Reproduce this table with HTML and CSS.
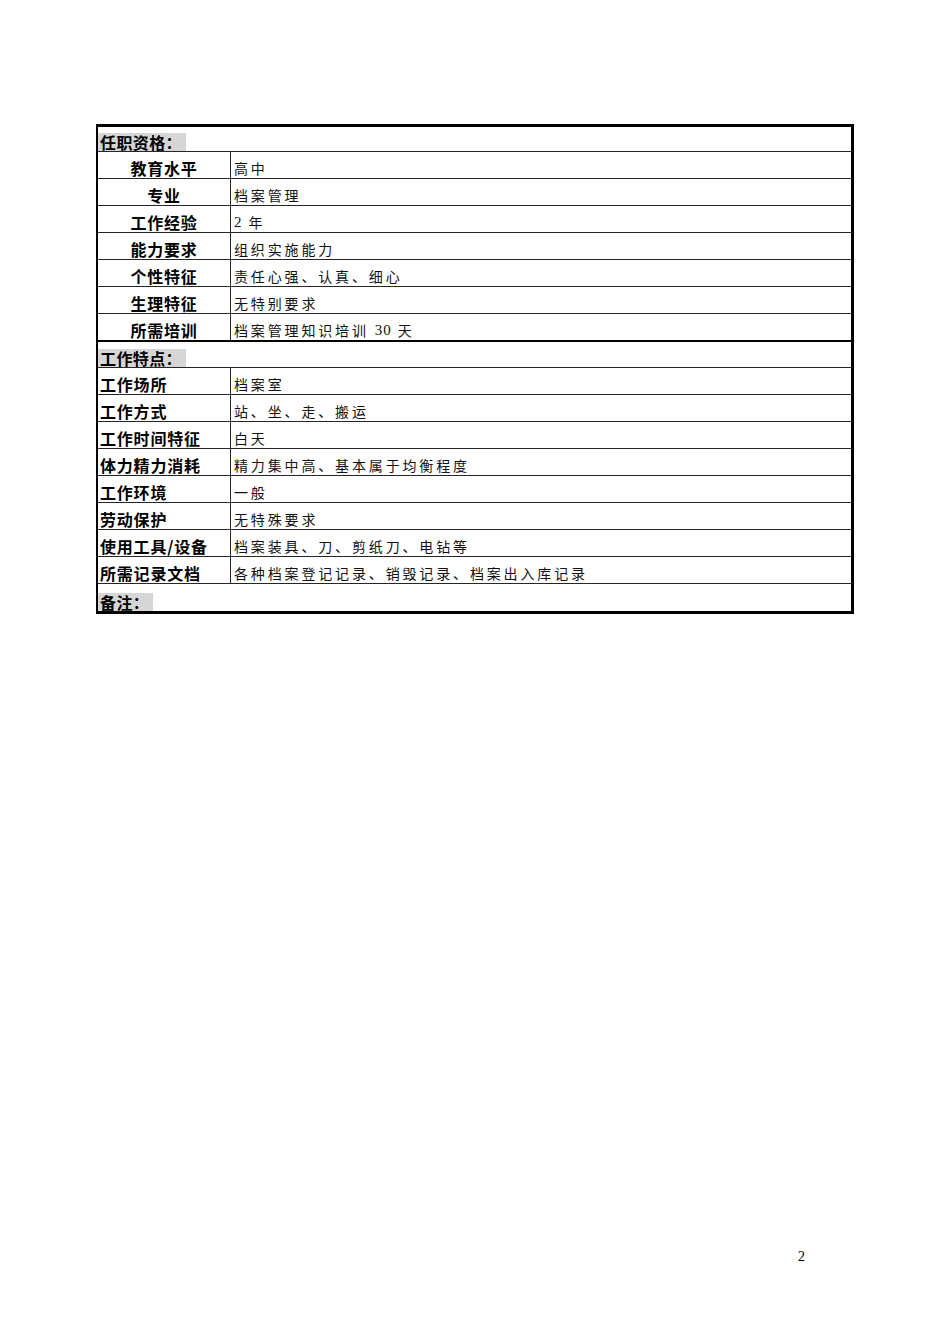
FILE: index.html
```html
<!DOCTYPE html>
<html lang="zh">
<head>
<meta charset="utf-8">
<title>任职资格</title>
<link rel="stylesheet" href="styles.css">
</head>
<body>
<div class="page">
  <div class="sheet">
    <div class="row section"><span class="tag">任职资格：</span></div>
    <div class="row"><div class="label center">教育水平</div><div class="value">高中</div></div>
    <div class="row"><div class="label center">专业</div><div class="value">档案管理</div></div>
    <div class="row"><div class="label center">工作经验</div><div class="value"><span class="num">2</span>&nbsp;年</div></div>
    <div class="row"><div class="label center">能力要求</div><div class="value">组织实施能力</div></div>
    <div class="row"><div class="label center">个性特征</div><div class="value">责任心强、认真、细心</div></div>
    <div class="row"><div class="label center">生理特征</div><div class="value">无特别要求</div></div>
    <div class="row last"><div class="label center">所需培训</div><div class="value">档案管理知识培训&nbsp;<span class="num">30</span>&nbsp;天</div></div>
    <div class="row section"><span class="tag">工作特点：</span></div>
    <div class="row"><div class="label">工作场所</div><div class="value">档案室</div></div>
    <div class="row"><div class="label">工作方式</div><div class="value">站、坐、走、搬运</div></div>
    <div class="row"><div class="label">工作时间特征</div><div class="value">白天</div></div>
    <div class="row"><div class="label">体力精力消耗</div><div class="value">精力集中高、基本属于均衡程度</div></div>
    <div class="row"><div class="label">工作环境</div><div class="value">一般</div></div>
    <div class="row"><div class="label">劳动保护</div><div class="value">无特殊要求</div></div>
    <div class="row"><div class="label">使用工具/设备</div><div class="value">档案装具、刀、剪纸刀、电钻等</div></div>
    <div class="row"><div class="label">所需记录文档</div><div class="value">各种档案登记记录、销毁记录、档案出入库记录</div></div>
    <div class="row section end"><span class="tag">备注：</span></div>
  </div>
  <div class="pagenum">2</div>
</div>
</body>
</html>
```

FILE: styles.css
```css
html, body {
  margin: 0;
  padding: 0;
  background: #fff;
}
.page {
  width: 950px;
  height: 1344px;
  padding-top: 124px;
  box-sizing: border-box;
}
.sheet {
  margin-left: 96px;
  width: 758px;
  box-sizing: border-box;
  border-top: 3px solid #000;
  border-left: 2px solid #000;
  border-right: 3px solid #000;
  border-bottom: 3px solid #000;
  font-family: "Noto Sans CJK SC", sans-serif;
  color: #000;
}
.row {
  display: grid;
  grid-template-columns: 133px 1fr;
  height: 26px;
  border-bottom: 1px solid #262626;
}
.row.last {
  border-bottom: 2px solid #000;
  height: 26px;
}
.row.section {
  display: flex;
  align-items: flex-end;
  height: 25px;
}
.row.section:first-child {
  height: 24px;
}
.row.section.end {
  border-bottom: none;
  height: 27px;
}
.tag {
  font-weight: 700;
  font-size: 16px;
  line-height: 18px;
  background: #d6d6d6;
  padding: 0 4px 0 2px;
  letter-spacing: 0.4px;
}
.label {
  display: flex;
  align-items: flex-end;
  border-right: 1px solid #262626;
  font-weight: 700;
  font-size: 16px;
  line-height: 18px;
  padding: 0 0 1px 2px;
  letter-spacing: 0.8px;
  white-space: nowrap;
}
.label.center {
  justify-content: center;
  padding-left: 0;
}
.value {
  display: flex;
  align-items: flex-end;
  font-size: 14px;
  line-height: 16px;
  padding: 0 0 2px 3px;
  letter-spacing: 2.85px;
  font-weight: 400;
  color: #111;
  white-space: nowrap;
}
.num {
  font-family: "Liberation Serif", serif;
  font-size: 15px;
  letter-spacing: 1px;
}
.pagenum {
  margin-top: calc(1249px - 124px - 490px);
  padding-left: 798px;
  font-family: "Liberation Serif", serif;
  font-size: 14px;
  line-height: 16px;
}
```
